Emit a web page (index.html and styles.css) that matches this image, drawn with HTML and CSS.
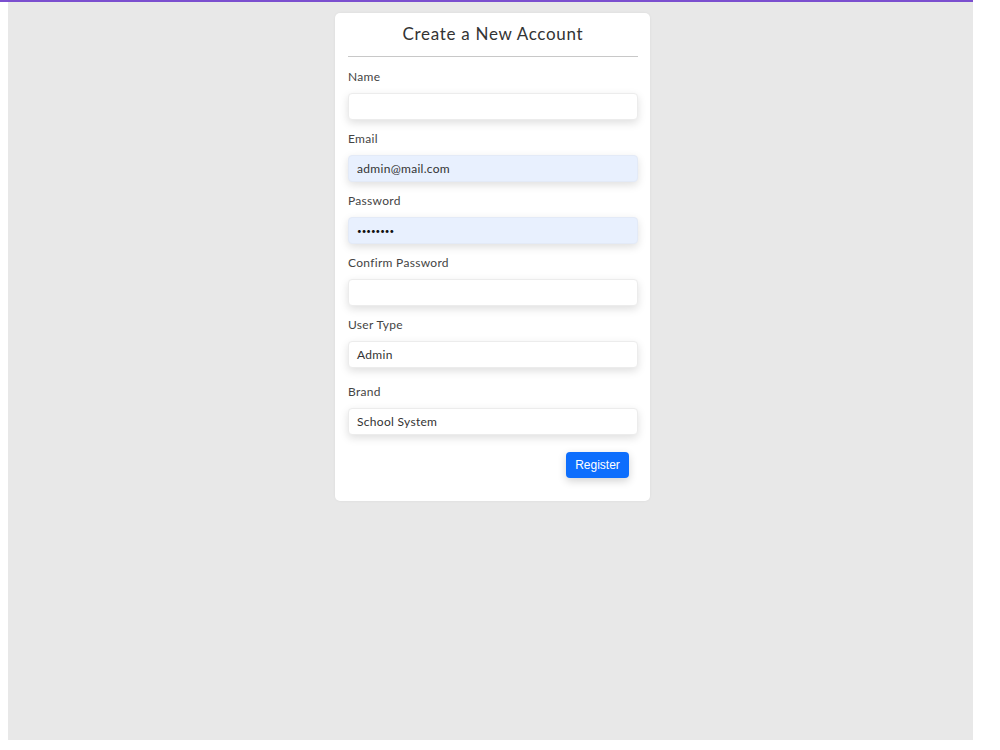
FILE: index.html
```html
<!DOCTYPE html>
<html lang="en">
<head>
  <meta charset="UTF-8">
  <title>Create a New Account</title>
  <link rel="stylesheet" href="styles.css">
</head>
<body>

  <div class="topbar"></div>

  <div class="page">
    <div class="card">
      <h3>Create a New Account</h3>
      <hr>

      <div class="group">
        <label>Name</label>
        <input type="text" class="field">
      </div>
      <div class="group">
        <label>Email</label>
        <input type="text" class="field filled" value="admin@mail.com">
      </div>
      <div class="group">
        <label>Password</label>
        <input type="password" class="field filled pass" value="12345678">
      </div>
      <div class="group">
        <label>Confirm Password</label>
        <input type="password" class="field">
      </div>
      <div class="group select-group">
        <label>User Type</label>
        <div class="field">Admin</div>
      </div>
      <div class="group">
        <label>Brand</label>
        <div class="field">School System</div>
      </div>

      <div class="actions">
        <button class="btn-register">Register</button>
      </div>
    </div>
  </div>

</body>
</html>
```

FILE: styles.css
```css
body {
  margin: 0;
  background: #fff;
  font-family: Lato, "Noto Sans", sans-serif;
  color: #333;
}
.topbar {
  width: 973px;
  height: 2px;
  background: #7b4fcf;
}
.page {
  margin-left: 8px;
  width: 965px;
  height: 738px;
  background: #e8e8e8;
  padding-top: 11px;
  box-sizing: border-box;
}
.card {
  width: 315px;
  margin-left: 327px;
  background: #fff;
  border-radius: 5px;
  padding: 10px 12px 23px 13px;
  box-sizing: border-box;
  box-shadow: 0 0 3px rgba(0, 0, 0, 0.06);
}
h3 {
  margin: 0;
  font-size: 17px;
  font-weight: 400;
  line-height: 22px;
  letter-spacing: 0.7px;
  text-align: center;
  color: #333;
}
hr {
  border: none;
  border-top: 1px solid #c8c8c8;
  margin: 11px 0 12px;
}
.group {
  margin-bottom: 11px;
}
.select-group {
  margin-bottom: 16px;
}
label {
  display: block;
  font-size: 12px;
  line-height: 16px;
  letter-spacing: 0.3px;
  margin-bottom: 8px;
  color: #444;
}
.field {
  display: block;
  width: 100%;
  height: 27px;
  box-sizing: border-box;
  border: 1px solid #ececec;
  border-radius: 4px;
  background: #fff;
  padding: 0 8px;
  font-family: Lato, "Noto Sans", sans-serif;
  font-size: 12px;
  line-height: 25px;
  letter-spacing: 0.3px;
  color: #333;
  box-shadow: 0 3px 8px rgba(0, 0, 0, 0.13);
  outline: none;
}
.filled {
  background: #e8f0fe;
  border-color: #e3eaf7;
}
.pass {
  font-size: 8px;
  letter-spacing: 0;
  color: #111;
}
.actions {
  display: flex;
  justify-content: flex-end;
  padding-right: 9px;
  margin-top: 17px;
}
.btn-register {
  background: #0d6efd;
  color: #fff;
  border: none;
  border-radius: 4px;
  height: 26px;
  width: 63px;
  font-family: "Liberation Sans", Arial, sans-serif;
  font-size: 12px;
  box-shadow: 0 3px 8px rgba(0, 0, 0, 0.18);
  cursor: pointer;
}
```
